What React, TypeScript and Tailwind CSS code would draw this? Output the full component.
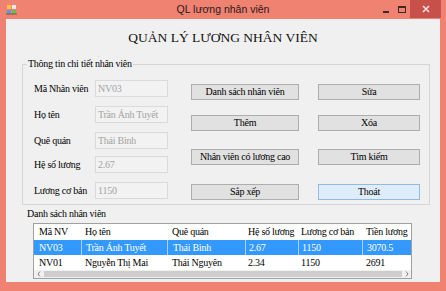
import React from 'react';

const fields = [
  { label: 'Mã Nhân viên', value: 'NV03', mt: 'mt-0' },
  { label: 'Họ tên', value: 'Trần Ánh Tuyết', mt: 'mt-[9px]' },
  { label: 'Quê quán', value: 'Thái Bình', mt: 'mt-[9px]' },
  { label: 'Hệ số lương', value: '2.67', mt: 'mt-[7px]' },
  { label: 'Lương cơ bản', value: '1150', mt: 'mt-[9px]' },
];

const buttonRows = [
  { left: 'Danh sách nhân viên', right: 'Sửa', mt: 'mt-[4px]' },
  { left: 'Thêm', right: 'Xóa', mt: 'mt-[15px]' },
  { left: 'Nhân viên có lương cao', right: 'Tìm kiếm', mt: 'mt-[18px]' },
  { left: 'Sắp xếp', right: 'Thoát', mt: 'mt-[19px]' },
];

const columns = [
  { title: 'Mã NV', w: 'w-[47px]', pl: 'pl-[5px]' },
  { title: 'Họ tên', w: 'w-[86px]', pl: 'pl-[4px]' },
  { title: 'Quê quán', w: 'w-[78px]', pl: 'pl-[5px]' },
  { title: 'Hệ số lương', w: 'w-[53px]', pl: 'pl-[3px]' },
  { title: 'Lương cơ bản', w: 'w-[64px]', pl: 'pl-[3px]' },
  { title: 'Tiền lương', w: 'w-[60px]', pl: 'pl-[4px]' },
];

const rows = [
  ['NV03', 'Trần Ánh Tuyết', 'Thái Bình', '2.67', '1150', '3070.5'],
  ['NV01', 'Nguyễn Thị Mai', 'Thái Nguyên', '2.34', '1150', '2691'],
];

function AppIcon() {
  return (
    <svg width="11" height="11" viewBox="0 0 11 11">
      <rect x="1" y="1" width="4" height="4" fill="#f4c542" />
      <rect x="6" y="1" width="4" height="4" fill="#e9e9e9" />
      <rect x="1" y="6" width="4" height="4" fill="#5a9be0" />
      <rect x="6" y="6" width="4" height="4" fill="#6fb85a" />
      <rect x="0" y="9" width="11" height="2" fill="#8a6a4a" opacity="0.7" />
    </svg>
  );
}

export default function App() {
  return (
    <div className="w-[446px] h-[291px] bg-[#f08272] flex flex-col font-['Liberation_Serif',serif] text-[10px] text-black overflow-hidden">
      {/* Title bar */}
      <div className="h-[19px] grid grid-cols-[1fr_auto_1fr] items-center">
        <div className="pl-[6px] flex items-center">
          <AppIcon />
        </div>
        <div className="font-['Liberation_Sans',sans-serif] text-[10.5px] leading-[19px] text-[#2a1a18]">QL lương nhân viên</div>
        <div className="flex justify-end items-start h-full pr-[5px]">
          <div className="w-[16px] h-[19px] flex items-center justify-center">
            <div className="w-[6px] h-[2px] bg-[#3a2a28] mt-[4px]" />
          </div>
          <div className="w-[16px] h-[19px] flex items-center justify-center">
            <div className="w-[8px] h-[7px] border border-[#3a2a28] border-t-2" />
          </div>
          <div className="w-[31px] h-[18px] bg-[#c8504b] flex items-center justify-center">
            <svg width="8" height="8" viewBox="0 0 8 8">
              <path d="M1 1 L7 7 M7 1 L1 7" stroke="#f4dede" strokeWidth="1.6" />
            </svg>
          </div>
        </div>
      </div>

      {/* Client area */}
      <div className="mx-[6px] h-[263px] bg-[#f0f0f0] flex flex-col">
        <div className="pt-[10px] text-center text-[13.5px] leading-[17px] text-[#111]">QUẢN LÝ LƯƠNG NHÂN VIÊN</div>

        <div className="tracking-[-0.25px] flex flex-col">
          {/* Group: details */}
          <div className="relative mt-[18px] ml-[16px] w-[408px] h-[141px] border border-[#d5d5d5]">
            <span className="absolute -top-[8px] left-[4px] bg-[#f0f0f0] px-px leading-[14px]">Thông tin chi tiết nhân viên</span>
            <div className="flex pt-[15px] pl-[11px]">
              <div className="flex flex-col">
                {fields.map((f) => (
                  <div key={f.label} className={`flex items-center h-[17px] ${f.mt}`}>
                    <div className="w-[61px] leading-[14px] whitespace-nowrap">{f.label}</div>
                    <div className="w-[73px] h-[17px] border border-[#dadada] bg-[#f2f2f2] pl-[2px] leading-[15px] text-[#a3a3a3] whitespace-nowrap overflow-hidden">
                      {f.value}
                    </div>
                  </div>
                ))}
              </div>
              <div className="flex flex-col ml-[23px]">
                {buttonRows.map((r) => (
                  <div key={r.left} className={`flex gap-[19px] ${r.mt}`}>
                    <div className="w-[108px] h-[16px] border border-[#adadad] bg-[#e1e1e1] flex items-center justify-center leading-[14px] whitespace-nowrap">
                      {r.left}
                    </div>
                    <div
                      className={
                        r.right === 'Thoát'
                          ? 'w-[102px] h-[16px] border border-[#8fbbe6] bg-[#dfedfb] flex items-center justify-center leading-[14px]'
                          : 'w-[102px] h-[16px] border border-[#adadad] bg-[#e1e1e1] flex items-center justify-center leading-[14px]'
                      }
                    >
                      {r.right}
                    </div>
                  </div>
                ))}
              </div>
            </div>
          </div>

          {/* Group: list */}
          <div className="mt-[2px] ml-[21px] leading-[14px]">Danh sách nhân viên</div>
          <div className="mt-[2px] ml-[27px] w-[379px] border border-[#a0a0a0] bg-white overflow-hidden">
            <div className="flex h-[16px] items-center">
              {columns.map((c) => (
                <div key={c.title} className={`${c.w} ${c.pl} shrink-0 whitespace-nowrap leading-[14px]`}>
                  {c.title}
                </div>
              ))}
            </div>
            {rows.map((row, i) => (
              <div key={row[0]} className={i === 0 ? 'flex h-[15px] bg-[#3399ff] text-white' : 'flex h-[15px]'}>
                {row.map((cell, j) => (
                  <div
                    key={j}
                    className={`${columns[j].w} ${columns[j].pl} shrink-0 whitespace-nowrap leading-[15px] ${
                      i === 0 && j > 0 ? 'border-l border-[#a9d2ff]' : ''
                    }`}
                  >
                    {cell}
                  </div>
                ))}
              </div>
            ))}
            <div className="flex h-[8px] items-center bg-[#f0f0f0]">
              <div className="w-[10px] flex justify-center">
                <svg width="4" height="6" viewBox="0 0 4 6">
                  <path d="M3 0.5 L1 3 L3 5.5" stroke="#808080" fill="none" strokeWidth="1" />
                </svg>
              </div>
              <div className="w-[358px] h-[6px] bg-[#cdcdcd]" />
              <div className="flex-1 flex justify-center">
                <svg width="4" height="6" viewBox="0 0 4 6">
                  <path d="M1 0.5 L3 3 L1 5.5" stroke="#808080" fill="none" strokeWidth="1" />
                </svg>
              </div>
            </div>
          </div>
        </div>
      </div>
    </div>
  );
}
